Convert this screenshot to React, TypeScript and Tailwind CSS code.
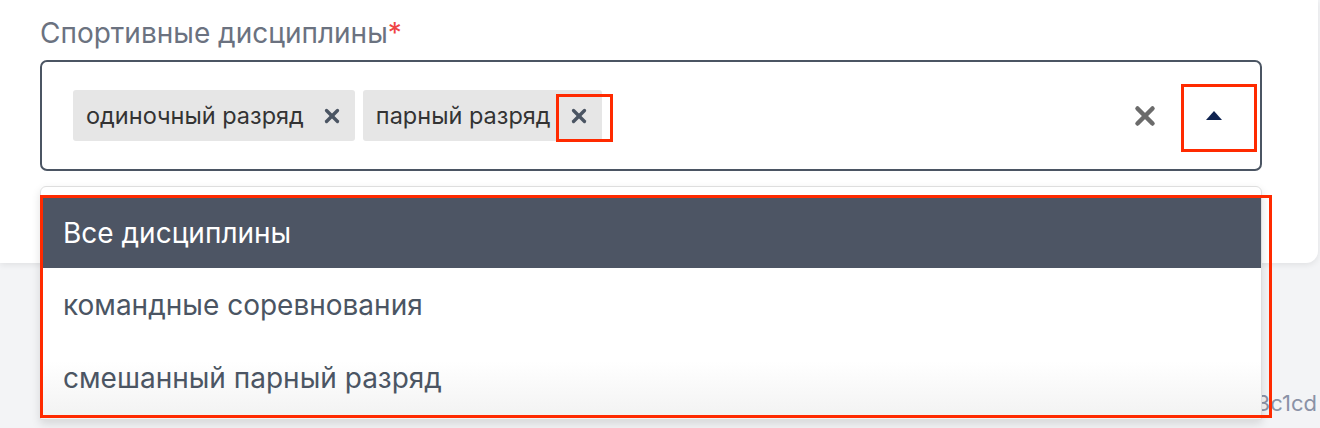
import { X } from 'lucide-react';

const SELECTED = ['одиночный разряд', 'парный разряд'];
const OPTIONS = ['Все дисциплины', 'командные соревнования', 'смешанный парный разряд'];

function Chip({ label }: { label: string }) {
  return (
    <div className="flex h-[51px] items-center gap-[17px] rounded-[3px] bg-[#e6e6e6] pl-[13px] pr-[12px] text-[23.5px] text-[#333]">
      <span>{label}</span>
      <X size={22} strokeWidth={3.6} className="text-[#4b5563]" />
    </div>
  );
}

export default function App() {
  return (
    <div className="relative h-[428px] w-[1320px] overflow-hidden bg-[#f3f4f6] font-['Inter',sans-serif]">
      <div className="h-[263px] w-[1318px] rounded-br-[12px] bg-white pl-[40px] pt-[16px] shadow-[0_2px_6px_rgba(0,0,0,0.08)]">
        <label className="block text-[28px] leading-[34px] text-[#6b7280]">
          Спортивные дисциплины<span className="text-[#ef4444]">*</span>
        </label>
        <div className="mt-[10px] flex h-[111px] w-[1222px] items-center rounded-[7px] border-2 border-[#4b5563] pl-[31px] pr-[30px]">
          <div className="flex flex-1 gap-2">
            {SELECTED.map((s) => (
              <Chip key={s} label={s} />
            ))}
          </div>
          <X size={30} strokeWidth={3.6} className="mr-[38px] text-[#6b6b6b]" />
          <div className="flex h-[32px] w-[32px] items-center justify-center">
            <svg width="16" height="9" viewBox="0 0 16 9">
              <path d="M8 0 L16 9 L0 9 Z" fill="#0f2350" />
            </svg>
          </div>
        </div>
      </div>
      <div className="flex justify-end pr-[3px] pt-[128px] text-[22px] leading-[24px] text-[#8a92a6]">3c1cd</div>

      {/* dropdown menu */}
      <div className="absolute left-[40px] top-[186px] flex h-[234px] w-[1222px] flex-col rounded-t-[6px] border border-[#dedede] bg-gradient-to-b from-white from-75% to-[#f2f2f2] pt-[10px] shadow-[0_4px_10px_rgba(0,0,0,0.12)]">
        {OPTIONS.map((o, i) => (
          <div
            key={o}
            className={
              i === 0
                ? 'flex h-[71px] items-center bg-[#4d5564] pl-[22px] text-[28px] text-white'
                : 'flex h-[73px] items-center pl-[22px] text-[28px] text-[#4b5563]'
            }
          >
            {o}
          </div>
        ))}
      </div>

      {/* red annotation boxes */}
      <div className="absolute left-[556px] top-[94px] h-[48px] w-[57px] border-[3px] border-[#ff2a00]" />
      <div className="absolute left-[1181px] top-[84px] h-[68px] w-[76px] border-[3px] border-[#ff2a00]" />
      <div className="absolute left-[40px] top-[195px] h-[223px] w-[1232px] border-[3px] border-[#ff2a00]" />
    </div>
  );
}
